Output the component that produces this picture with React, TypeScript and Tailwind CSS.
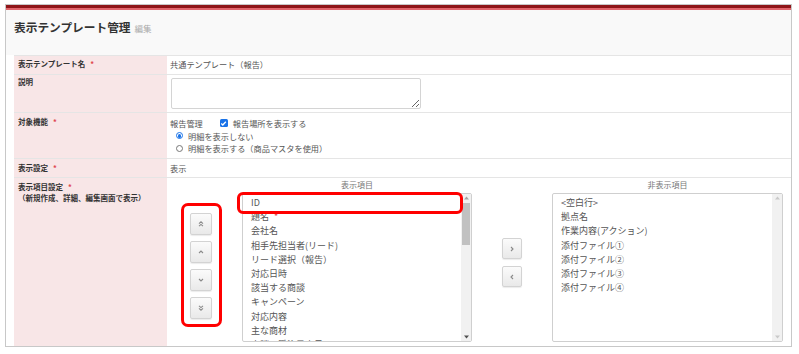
import React from "react";

const FONT = "font-['Noto_Sans_CJK_JP','Noto_Sans',sans-serif]";

function Star() {
  return <span className="ml-[5px] text-[#e0484e]">*</span>;
}

function Chevron({ dir, double }: { dir: "up" | "down"; double?: boolean }) {
  const up = dir === "up";
  return (
    <svg width="8" height="8" viewBox="0 0 8 8" fill="none" stroke="#8a8a8a" strokeWidth="1.1">
      {double ? (
        up ? (
          <>
            <path d="M2 3.6 L4 1.8 L6 3.6" />
            <path d="M2 6.2 L4 4.4 L6 6.2" />
          </>
        ) : (
          <>
            <path d="M2 1.8 L4 3.6 L6 1.8" />
            <path d="M2 4.4 L4 6.2 L6 4.4" />
          </>
        )
      ) : up ? (
        <path d="M2 5 L4 3 L6 5" />
      ) : (
        <path d="M2 3 L4 5 L6 3" />
      )}
    </svg>
  );
}

function SideChevron({ dir }: { dir: "left" | "right" }) {
  return (
    <svg width="8" height="8" viewBox="0 0 8 8" fill="none" stroke="#8a8a8a" strokeWidth="1.1">
      {dir === "right" ? <path d="M3 2 L5 4 L3 6" /> : <path d="M5 2 L3 4 L5 6" />}
    </svg>
  );
}

function Btn({ children, h = "h-[22px]", w = "w-[22px]" }: { children: React.ReactNode; h?: string; w?: string }) {
  return (
    <div
      className={`${w} ${h} flex items-center justify-center rounded-[2px] border border-[#d3d3d3] bg-gradient-to-b from-[#fbfbfb] to-[#e9e9e9] shadow-[0_1px_1px_rgba(0,0,0,0.08)]`}
    >
      {children}
    </div>
  );
}

function Scrollbar({ thumb }: { thumb?: boolean }) {
  return (
    <div className="w-[10px] h-full bg-[#f1f1f1] flex flex-col items-center">
      <div className="h-[8px] flex items-center justify-center">
        <svg width="5" height="4" viewBox="0 0 5 4">
          <path d="M0 3.5 L2.5 0.5 L5 3.5 Z" fill={thumb ? "#a3a3a3" : "#c9c9c9"} />
        </svg>
      </div>
      <div className="flex-1 w-full">
        {thumb && <div className="mt-[1px] h-[42px] w-[8px] mx-auto bg-[#c1c1c1]" />}
      </div>
      <div className="h-[8px] flex items-center justify-center">
        <svg width="5" height="4" viewBox="0 0 5 4">
          <path d="M0 0.5 L2.5 3.5 L5 0.5 Z" fill={thumb ? "#505050" : "#c9c9c9"} />
        </svg>
      </div>
    </div>
  );
}

const shown = [
  "ID",
  "題名",
  "会社名",
  "相手先担当者(リード)",
  "リード選択（報告）",
  "対応日時",
  "該当する商談",
  "キャンペーン",
  "対応内容",
  "主な商材",
  "商談の受注予定日",
];

const hidden = ["<空白行>", "拠点名", "作業内容(アクション)", "添付ファイル①", "添付ファイル②", "添付ファイル③", "添付ファイル④"];

export default function App() {
  return (
    <div className={`w-[799px] h-[354px] bg-white pt-[4px] pl-[5px] ${FONT} text-[#555]`}>
      <div className="w-[787px] h-[343px] border border-[#c8c8c8] flex flex-col overflow-hidden">
        <div className="h-[3px] shrink-0 bg-[#8e1518]" />
        <div className="h-[2px] shrink-0 bg-[#e0656c]" />
        <div className="h-[45px] shrink-0 bg-[#f9f9f9] pl-[8px] pt-[10px] flex items-baseline">
          <span className="text-[11.7px] leading-[14px] font-bold text-[#333]">表示テンプレート管理</span>
          <span className="ml-[4px] text-[8.5px] text-[#aaa]">編集</span>
        </div>
        <div className="flex-1 pl-[8px] flex flex-col">
          {/* row 1 */}
          <div className="h-[19px] shrink-0 flex border-t border-[#e5e5e5]">
            <div className="w-[153px] bg-[#f8e6e7] pl-[4px] pt-[2px] text-[7.5px] leading-[12px] font-bold text-[#333]">
              表示テンプレート名<Star />
            </div>
            <div className="flex-1 pl-[3px] pt-[2px] text-[8.2px] leading-[12px]">共通テンプレート（報告）</div>
          </div>
          {/* row 2 */}
          <div className="h-[38px] shrink-0 flex border-t border-[#e5e5e5]">
            <div className="w-[153px] bg-[#f8e6e7] pl-[4px] pt-[1px] text-[7.5px] leading-[12px] font-bold text-[#333]">
              説明
            </div>
            <div className="flex-1 pl-[4px] pt-[3px]">
              <textarea
                readOnly
                className="block w-[250px] h-[31px] border border-[#d4d4d4] rounded-[2px] bg-white"
              />
            </div>
          </div>
          {/* row 3 */}
          <div className="h-[46px] shrink-0 flex border-t border-[#e5e5e5]">
            <div className="w-[153px] bg-[#f8e6e7] pl-[4px] pt-[3px] text-[7.5px] leading-[12px] font-bold text-[#333]">
              対象機能<Star />
            </div>
            <div className="flex-1 pl-[3px] pt-[4px] text-[8.2px] leading-[12.5px]">
              <div className="flex items-center">
                <span>報告管理</span>
                <span className="ml-[17px] w-[8px] h-[8px] rounded-[1.5px] bg-[#1a73e8] flex items-center justify-center">
                  <svg width="7" height="7" viewBox="0 0 7 7" fill="none" stroke="white" strokeWidth="1.3">
                    <path d="M1.3 3.6 L2.8 5 L5.8 1.8" />
                  </svg>
                </span>
                <span className="ml-[5px]">報告場所を表示する</span>
              </div>
              <div className="flex items-center pl-[6px]">
                <span className="w-[7px] h-[7px] rounded-full border border-[#1a73e8] flex items-center justify-center">
                  <span className="w-[3.5px] h-[3.5px] rounded-full bg-[#1a73e8]" />
                </span>
                <span className="ml-[5px]">明細を表示しない</span>
              </div>
              <div className="flex items-center pl-[6px]">
                <span className="w-[7px] h-[7px] rounded-full border border-[#777]" />
                <span className="ml-[5px]">明細を表示する（商品マスタを使用）</span>
              </div>
            </div>
          </div>
          {/* row 4 */}
          <div className="h-[19px] shrink-0 flex border-t border-[#e5e5e5]">
            <div className="w-[153px] bg-[#f8e6e7] pl-[4px] pt-[3px] text-[7.5px] leading-[12px] font-bold text-[#333]">
              表示設定<Star />
            </div>
            <div className="flex-1 pl-[3px] pt-[3px] text-[8.2px] leading-[12px]">表示</div>
          </div>
          {/* row 5 */}
          <div className="flex-1 flex border-t border-[#e5e5e5]">
            <div className="w-[153px] bg-[#f8e6e7] pl-[4px] pt-[3px] text-[7.5px] leading-[11px] font-bold text-[#333]">
              <div>
                表示項目設定<Star />
              </div>
              <div>（新規作成、詳細、編集画面で表示）</div>
            </div>
            <div className="flex-1 flex items-start pl-[14px]">
              {/* reorder */}
              <div className="mt-[25px] w-[41px] h-[124px] border-[3px] border-[#ff0000] rounded-[7px] pl-[6px] pt-[7px] flex flex-col gap-[6px]">
                <Btn><Chevron dir="up" double /></Btn>
                <Btn><Chevron dir="up" /></Btn>
                <Btn><Chevron dir="down" /></Btn>
                <Btn><Chevron dir="down" double /></Btn>
              </div>
              {/* shown list */}
              <div className="ml-[20px] w-[230px] flex flex-col">
                <div className="pt-[1px] h-[13px] text-center text-[8px] leading-[12px] text-[#777]">表示項目</div>
                <div className="mt-[2px] relative h-[149px] border border-[#cfcfcf] rounded-[2px] flex bg-white">
                  <div className="flex-1 overflow-hidden pl-[8px] pt-[2px] text-[9px] leading-[14.2px] text-[#555]">
                    {shown.map((s, i) => (
                      <div key={i} className="whitespace-nowrap">
                        {s}
                        {s === "題名" && <span className="ml-[5px] text-[#e0484e]">*</span>}
                      </div>
                    ))}
                  </div>
                  <Scrollbar thumb />
                  <div className="absolute left-[-6px] top-[-2px] w-[226px] h-[22px] border-[3px] border-[#ff0000] rounded-[6px]" />
                </div>
              </div>
              {/* move buttons */}
              <div className="ml-[30px] mt-[60px] flex flex-col gap-[7px]">
                <Btn w="w-[20px]" h="h-[21px]"><SideChevron dir="right" /></Btn>
                <Btn w="w-[20px]" h="h-[21px]"><SideChevron dir="left" /></Btn>
              </div>
              {/* hidden list */}
              <div className="ml-[30px] w-[231px] flex flex-col">
                <div className="pt-[1px] h-[13px] text-center text-[8px] leading-[12px] text-[#777]">非表示項目</div>
                <div className="mt-[2px] h-[149px] border border-[#cfcfcf] rounded-[2px] flex bg-white">
                  <div className="flex-1 overflow-hidden pl-[8px] pt-[2px] text-[9px] leading-[14.2px] text-[#555]">
                    {hidden.map((s, i) => (
                      <div key={i} className="whitespace-nowrap">{s}</div>
                    ))}
                  </div>
                  <Scrollbar />
                </div>
              </div>
            </div>
          </div>
        </div>
      </div>
    </div>
  );
}
